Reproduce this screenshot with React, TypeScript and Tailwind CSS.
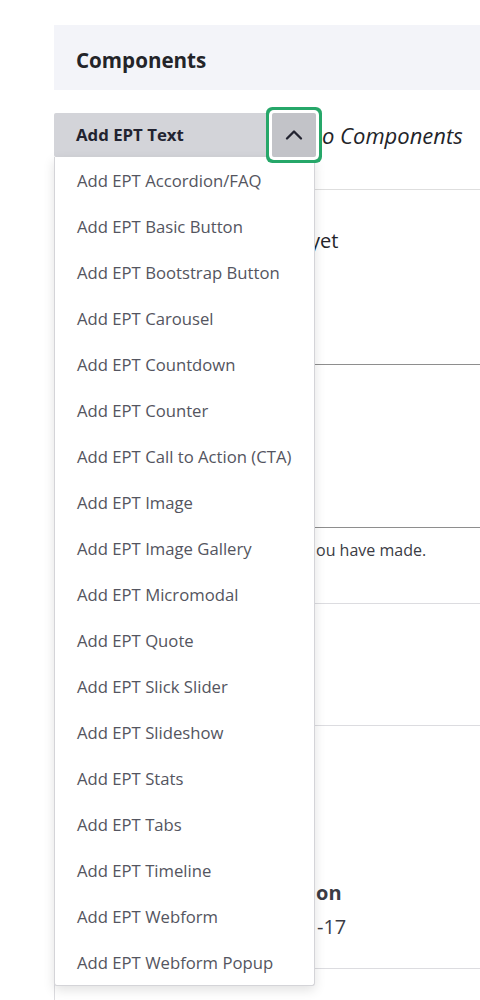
import { ChevronUp } from 'lucide-react';

const items = [
  'Add EPT Accordion/FAQ',
  'Add EPT Basic Button',
  'Add EPT Bootstrap Button',
  'Add EPT Carousel',
  'Add EPT Countdown',
  'Add EPT Counter',
  'Add EPT Call to Action (CTA)',
  'Add EPT Image',
  'Add EPT Image Gallery',
  'Add EPT Micromodal',
  'Add EPT Quote',
  'Add EPT Slick Slider',
  'Add EPT Slideshow',
  'Add EPT Stats',
  'Add EPT Tabs',
  'Add EPT Timeline',
  'Add EPT Webform',
  'Add EPT Webform Popup',
];

const App = () => {
  return (
    <div
      className="min-h-[1000px] bg-white pl-[54px] pt-[25px] text-[#232429]"
      style={{ fontFamily: '"Open Sans", "Noto Sans", sans-serif' }}
    >
      {/* Section header */}
      <div className="flex h-[65px] items-center bg-[#f3f4f9] pl-[22px] pt-[5px]">
        <h2 className="text-[20.6px] font-bold">Components</h2>
      </div>

      <div className="relative mt-[17px]">
        {/* Add component row */}
        <div className="flex h-[56px] items-center">
          <div className="flex items-center">
            <button className="flex h-[44px] w-[216px] items-center rounded-l-[2px] bg-[#d3d4d9] pl-[22px] text-[16.8px] font-bold text-[#222330]">
              Add EPT Text
            </button>
            <button className="relative z-10 ml-[2px] flex h-[44px] w-[44px] items-center justify-center rounded-[2px] bg-[#c2c3c8] text-[#222330] shadow-[0_0_0_3px_#ffffff,0_0_0_6px_#26a769]">
              <ChevronUp size={28} strokeWidth={2} />
            </button>
          </div>
          <span className="ml-[6px] text-[22px] italic text-[#232429]">o Components</span>
        </div>

        {/* Content behind the open menu */}
        <div className="mt-[26px] border-l border-[#dcdce0]">
          <div className="flex h-[176px] items-start border-t border-b border-t-[#dedede] border-b-[#8e8e8e] pl-[255px] pt-[36px]">
            <span className="text-[20px]">yet</span>
          </div>
          <div className="h-[163px] border-b border-[#8e8e8e]" />
          <div className="flex h-[76px] items-start border-b border-[#dcdce0] pl-[261px] pt-[10px]">
            <span className="text-[16px] text-[#3b3c44]">ou have made.</span>
          </div>
          <div className="h-[122px] border-b border-[#dcdce0]" />
          <div className="flex h-[243px] flex-col items-start justify-end border-b border-[#dcdce0] pb-[26px] pl-[261px]">
            <span className="text-[20px] font-bold text-[#3b3c44]">on</span>
            <span className="mt-[4px] ml-[1px] text-[20px] text-[#3b3c44]">-17</span>
          </div>
          <div className="h-[40px]" />
        </div>

        {/* Open dropdown menu */}
        <ul className="absolute top-[50px] left-0 w-[261px] rounded-b-[3px] border border-t-0 border-[#d4d4d8] bg-white shadow-[0_4px_12px_rgba(0,0,0,0.12)]">
          {items.map((item) => (
            <li
              key={item}
              className="flex h-[46px] items-center pl-[22px] pt-[2px] text-[16.7px] text-[#545560]"
            >
              {item}
            </li>
          ))}
        </ul>
      </div>
    </div>
  );
};

export default App;
